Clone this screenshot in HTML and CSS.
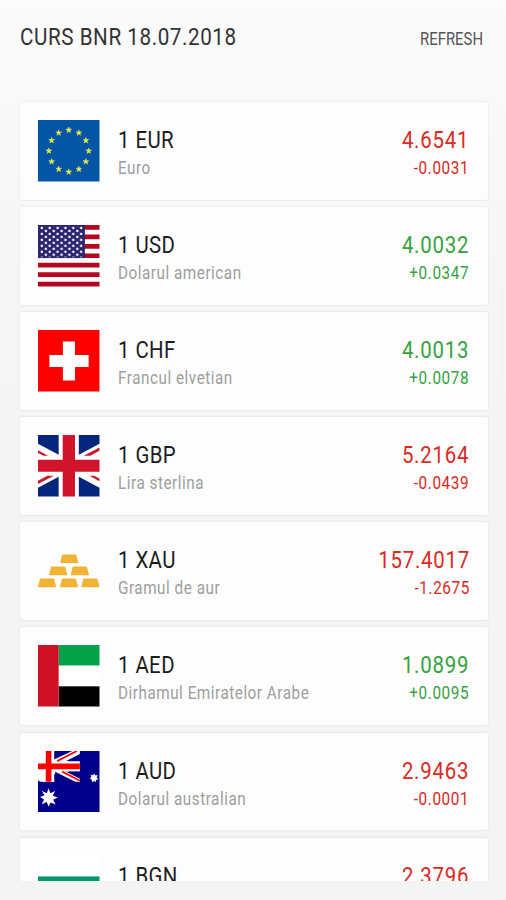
FILE: index.html
```html
<!DOCTYPE html>
<html lang="ro">
<head>
  <meta charset="UTF-8">
  <title>Curs BNR</title>
  <link rel="stylesheet" href="styles.css">
</head>
<body>
  <div class="app">
    <header class="header">
      <h1 class="title">CURS BNR 18.07.2018</h1>
      <button class="refresh">REFRESH</button>
    </header>

    <main class="list">
      <div class="card">
        <svg class="flag" viewBox="0 0 61 61">
          <defs>
            <path id="star" d="M0-3 .75-.95 2.85-.93 1.15.37 1.76 2.43 0 1.2-1.76 2.43-1.15.37-2.85-.93-.75-.95z"/>
          </defs>
          <rect width="61" height="61" fill="#0455a5"/>
          <g fill="#e9ec4b" stroke="#e9ec4b" stroke-width=".5">
            <use href="#star" x="30.5" y="10"/>
            <use href="#star" x="40.5" y="12.8"/>
            <use href="#star" x="47.5" y="20.3"/>
            <use href="#star" x="50.3" y="30.7"/>
            <use href="#star" x="47.5" y="41.3"/>
            <use href="#star" x="40.5" y="48.8"/>
            <use href="#star" x="30.5" y="51.5"/>
            <use href="#star" x="20.5" y="48.8"/>
            <use href="#star" x="13.5" y="41.3"/>
            <use href="#star" x="10.8" y="30.7"/>
            <use href="#star" x="13.5" y="20.3"/>
            <use href="#star" x="20.5" y="12.8"/>
          </g>
        </svg>
        <div class="info">
          <div class="code">1 EUR</div>
          <div class="name">Euro</div>
        </div>
        <div class="rate down">
          <div class="value">4.6541</div>
          <div class="change">-0.0031</div>
        </div>
      </div>

      <div class="card">
        <svg class="flag" viewBox="0 0 61 61">
          <defs>
            <pattern id="dots" x="0" y="0" width="7.8" height="5.9" patternUnits="userSpaceOnUse">
              <circle cx="3.8" cy="3" r="1.25" fill="#fff"/>
              <circle cx="7.8" cy="5.9" r="1.25" fill="#fff"/>
              <circle cx="0" cy="5.9" r="1.25" fill="#fff"/>
              <circle cx="7.8" cy="0" r="1.25" fill="#fff"/>
              <circle cx="0" cy="0" r="1.25" fill="#fff"/>
            </pattern>
          </defs>
          <rect width="61" height="61" fill="#fff"/>
          <path d="M0 2.35h61M0 11.73h61M0 21.11h61M0 30.5h61M0 39.9h61M0 49.27h61M0 58.65h61" stroke="#b3081f" stroke-width="4.7"/>
          <rect width="46.5" height="32.8" fill="#29246b"/>
          <rect x="1.5" y="1" width="43.5" height="31" fill="url(#dots)"/>
        </svg>
        <div class="info">
          <div class="code">1 USD</div>
          <div class="name">Dolarul american</div>
        </div>
        <div class="rate up">
          <div class="value">4.0032</div>
          <div class="change">+0.0347</div>
        </div>
      </div>

      <div class="card">
        <svg class="flag" viewBox="0 0 61 61">
          <rect width="61" height="61" fill="#fe0000"/>
          <path d="M24.7 11.3h12v13.4h13.5v12H36.7v13.5h-12V36.7H11.3v-12h13.4z" fill="#fff"/>
        </svg>
        <div class="info">
          <div class="code">1 CHF</div>
          <div class="name">Francul elvetian</div>
        </div>
        <div class="rate up">
          <div class="value">4.0013</div>
          <div class="change">+0.0078</div>
        </div>
      </div>

      <div class="card">
        <svg class="flag" viewBox="0 0 61 61">
          <rect width="61" height="61" fill="#fff"/>
          <path d="M0 0h20.5v19.7L0 8.8zM40.5 0H61v8.8L40.5 19.7zM0 61h20.5V41.3L0 52.2zM40.5 61H61v-8.8L40.5 41.3z" fill="#06257d"/>
          <path d="M0 15.2 10 20.5H5.5L0 17.8zM61 12.4v3.3l-9.3 4.8h-6.4zM0 48.6v-3.3l9.3-4.8h6.4zM61 45.8 51 40.5h4.5l5.5 2.7z" fill="#cf142b"/>
          <path d="M24.5 0h12.2v24.5H61v12H36.7V61H24.5V36.5H0v-12h24.5z" fill="#cf142b"/>
        </svg>
        <div class="info">
          <div class="code">1 GBP</div>
          <div class="name">Lira sterlina</div>
        </div>
        <div class="rate down">
          <div class="value">5.2164</div>
          <div class="change">-0.0439</div>
        </div>
      </div>

      <div class="card">
        <svg class="flag" viewBox="0 0 61 61">
          <defs>
            <path id="bar" d="M2.6 0h12.7q.5 0 .7.6L18 8q.1.6-.5.6H.5Q-.1 8.6 0 8L1.9.6Q2 0 2.6 0z"/>
          </defs>
          <g fill="#f2b233">
            <use href="#bar" x="22" y="14.3"/>
            <use href="#bar" x="11" y="26.3"/>
            <use href="#bar" x="32.5" y="26.3"/>
            <use href="#bar" x="0" y="38.3"/>
            <use href="#bar" x="21.7" y="38.3"/>
            <use href="#bar" x="43" y="38.3"/>
          </g>
        </svg>
        <div class="info">
          <div class="code">1 XAU</div>
          <div class="name">Gramul de aur</div>
        </div>
        <div class="rate down">
          <div class="value">157.4017</div>
          <div class="change">-1.2675</div>
        </div>
      </div>

      <div class="card">
        <svg class="flag" viewBox="0 0 61 61">
          <rect width="61" height="61" fill="#fff"/>
          <rect x="20.5" width="40.5" height="20.3" fill="#04a04a"/>
          <rect x="20.5" y="41" width="40.5" height="20" fill="#000"/>
          <rect width="20.5" height="61" fill="#ce1126"/>
        </svg>
        <div class="info">
          <div class="code">1 AED</div>
          <div class="name">Dirhamul Emiratelor Arabe</div>
        </div>
        <div class="rate up">
          <div class="value">1.0899</div>
          <div class="change">+0.0095</div>
        </div>
      </div>

      <div class="card">
        <svg class="flag" viewBox="0 0 61 61">
          <rect width="61" height="61" fill="#00008b"/>
          <path d="M0 0h41.500v3L26 11v8.500l15.500 8v3H37L17 20.500v10H2L0 29z" fill="#fff"/>
          <path d="M16 0h18L16 8.500zM16 22.500l15 8H16z" fill="#00008b"/>
          <path d="M5 0h11v10h25.500v10.500H16v10H5v-10H0V10h5z" fill="#fff"/>
          <path d="M30 10.200 41.500 4.500v5.700zM30 20.300l11.500 5.700v-5.700z" fill="#00008b"/>
          <path d="M7.700 0h5.600v12.500h28.200v5.500H13.300v12.500H7.700V18H0v-5.500h7.700z" fill="#f00"/>
          <path d="M19 10 38.500 0M24 20.500l17.500 9" stroke="#f00" stroke-width="1.800"/>
          <path d="m10.500 37 1.700 5 4.700-2.300-2.200 4.700 5 1.600-4.700 2.400 2.500 4.600-5-2-2 4.300-1.800-4.600-4.900 2 2.200-4.700L2 45.700l4.500-1.800L3.700 39.500l5 2.500z" fill="#fff"/>
          <path d="m55.700 22.800 1 1.800 2.100-.4-.8 2 1.500 1.500-2.100.7-.3 2-1.500-1-1.800 1-.2-2.100-1.800-.9 1.400-1.600-.5-2 2.100.6z" fill="#fff" stroke="#fff" stroke-width=".6"/>
        </svg>
        <div class="info">
          <div class="code">1 AUD</div>
          <div class="name">Dolarul australian</div>
        </div>
        <div class="rate down">
          <div class="value">2.9463</div>
          <div class="change">-0.0001</div>
        </div>
      </div>

      <div class="card">
        <svg class="flag" viewBox="0 0 61 61">
          <rect width="61" height="61" fill="#fff"/>
          <rect y="20.3" width="61" height="20.4" fill="#00966e"/>
          <rect y="40.7" width="61" height="20.3" fill="#d62612"/>
        </svg>
        <div class="info">
          <div class="code">1 BGN</div>
        </div>
        <div class="rate down">
          <div class="value">2.3796</div>
        </div>
      </div>
    </main>
    <div class="scrollbar"></div>
  </div>
</body>
</html>
```
FILE: styles.css
```css
* {
  box-sizing: border-box;
}
body {
  margin: 0;
  height: 900px;
  overflow: hidden;
  background: linear-gradient(to bottom, #fbfbfb 0, #f7f7f7 200px, #f4f4f4 500px);
  font-family: Roboto, sans-serif;
}
.app {
  position: relative;
  height: 881px;
  overflow: hidden;
}
.header {
  display: flex;
  justify-content: space-between;
  height: 102px;
  padding: 22px 23px 0 19.5px;
}
.title {
  margin: 0;
  font-size: 24px;
  line-height: 30px;
  font-weight: 400;
  letter-spacing: 0.65px;
  color: #333;
  white-space: nowrap;
  transform: scaleX(0.86);
  transform-origin: left;
}
.refresh {
  height: 34px;
  padding: 0;
  border: none;
  background: none;
  font-family: inherit;
  font-size: 17.5px;
  color: #555;
  transform: scaleX(0.85);
  transform-origin: right;
}
.list {
  display: flex;
  flex-direction: column;
  gap: 7.6px;
  padding: 0 18.5px 0 20px;
}
.card {
  display: flex;
  flex: none;
  height: 97.5px;
  padding: 18px 18px 0;
  background: #fdfdfd;
  border-radius: 2px;
  box-shadow: 0 0 2px rgba(0,0,0,0.14);
}
.flag {
  width: 61.5px;
  height: 61.5px;
  margin-right: 18.5px;
}
.info {
  flex: 1;
  white-space: nowrap;
  transform: scaleX(0.85);
  transform-origin: left;
}
.code {
  height: 34px;
  line-height: 40px;
  font-size: 24px;
  letter-spacing: 0.5px;
  color: #1c1c1c;
}
.name {
  line-height: 28px;
  font-size: 18px;
  letter-spacing: 0.6px;
  color: #9e9e9e;
}
.rate {
  text-align: right;
  transform: scaleX(0.85);
  transform-origin: right;
}
.value {
  height: 34px;
  line-height: 40px;
  font-size: 24px;
  letter-spacing: 0.9px;
}
.change {
  line-height: 28px;
  font-size: 18px;
  letter-spacing: 0.7px;
}
.up {
  color: #35a33f;
}
.down {
  color: #da2a22;
}
.scrollbar {
  position: absolute;
  top: 288px;
  right: 0;
  width: 4px;
  height: 90px;
  border-left: 1px solid #eee;
  background: #f6f6f6;
}
```
